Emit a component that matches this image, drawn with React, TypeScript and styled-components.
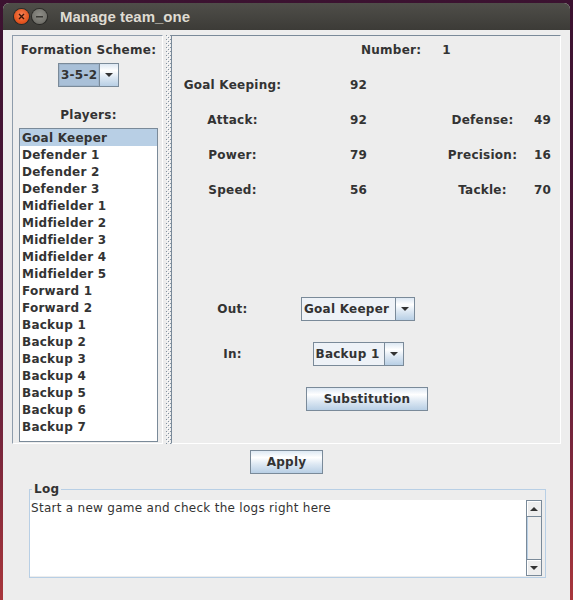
import React from "react";
import styled, { createGlobalStyle } from "styled-components";

const Global = createGlobalStyle`
  html, body { margin: 0; padding: 0; height: 100%; }
  body {
    background: linear-gradient(180deg, #3b1230 0%, #561a3b 55%, #a8363c 100%);
    overflow: hidden;
    font-family: "DejaVu Sans", "Liberation Sans", sans-serif;
  }
  * { box-sizing: border-box; }
`;

const Window = styled.div`
  margin: 3px 3px 0 3px;
  height: 597px;
  display: flex;
  flex-direction: column;
  border-radius: 6px 6px 0 0;
  overflow: hidden;
  background: #ededed;
`;

const TitleBar = styled.div`
  height: 27px;
  flex: none;
  display: flex;
  align-items: center;
  padding-left: 11px;
  background: linear-gradient(180deg, #4f4e49 0%, #3c3b37 100%);
`;

const WinButton = styled.div<{ $close?: boolean }>`
  width: 15px;
  height: 15px;
  border-radius: 50%;
  margin-right: 3px;
  display: flex;
  align-items: center;
  justify-content: center;
  box-shadow: 0 0 0 1px rgba(20, 20, 18, 0.55);
  background: ${(p) =>
    p.$close
      ? "radial-gradient(circle at 50% 40%, #f6855a 0%, #e6561f 60%, #c13d18 100%)"
      : "radial-gradient(circle at 50% 40%, #8f8e88 0%, #76756f 60%, #5f5e59 100%)"};
`;

const Title = styled.span`
  margin-left: 10px;
  font-family: "Liberation Sans", Arial, sans-serif;
  font-weight: bold;
  font-size: 15px;
  color: #dfdbd2;
`;

const Body = styled.div`
  flex: 1;
  display: flex;
  flex-direction: column;
  padding: 5px 9px 0 9px;
  color: #333333;
  font-size: 12px;
  font-weight: bold;
  letter-spacing: 0.25px;
`;

const Split = styled.div`
  display: flex;
  height: 409px;
  flex: none;
`;

const LeftPanel = styled.div`
  width: 151px;
  flex: none;
  display: flex;
  flex-direction: column;
  align-items: center;
  padding: 6px 4px 1px 6px;
  border: 1px solid;
  border-color: #8e9cab #ffffff #ffffff #8e9cab;
`;

const Label = styled.div`
  line-height: 17px;
  white-space: nowrap;
`;

const PlayersLabel = styled(Label)`
  margin-top: 20px;
`;

const Combo = styled.div<{ $w: number }>`
  width: ${(p) => p.$w}px;
  height: 24px;
  display: flex;
  border: 1px solid #7a8a99;
  flex: none;
  letter-spacing: 0.25px;
`;

const ComboValue = styled.div<{ $selected?: boolean }>`
  flex: 1;
  padding-left: 2px;
  display: flex;
  align-items: center;
  white-space: nowrap;
  background: ${(p) => (p.$selected ? "#a9c0d8" : "#eef2f7")};
  ${(p) => (p.$selected ? "box-shadow: inset 0 0 0 1px #9fb5cc;" : "")}
`;

const ComboArrow = styled.div`
  width: 19px;
  flex: none;
  border-left: 1px solid #7a8a99;
  display: flex;
  align-items: center;
  justify-content: center;
  background: linear-gradient(180deg, #dde8f3 0%, #ffffff 30%, #dde8f3 60%, #b8cfe5 100%);
`;

const FormationCombo = styled(Combo)`
  margin-top: 4px;
`;

const List = styled.div`
  align-self: stretch;
  flex: 1;
  margin-top: 4px;
  background: #ffffff;
  border: 1px solid #7a8a99;
`;

const ListItem = styled.div<{ $selected?: boolean }>`
  height: 17px;
  line-height: 17px;
  padding: 1px 0 0 2px;
  white-space: nowrap;
  background: ${(p) => (p.$selected ? "#b8cfe5" : "transparent")};
`;

const Divider = styled.div`
  width: 8px;
  flex: none;
  padding-left: 3px;
  display: flex;
`;

const RightPanel = styled.div`
  flex: 1;
  display: flex;
  flex-direction: column;
  padding-top: 6px;
  border: 1px solid;
  border-color: #7a8a99 #ffffff #ffffff #7a8a99;
`;

const NumberRow = styled.div`
  display: flex;
  gap: 21px;
  padding-left: 189px;
  line-height: 17px;
  margin-bottom: 18px;
`;

const StatsGrid = styled.div`
  display: grid;
  grid-template-columns: 121px 139px 101px auto;
  grid-auto-rows: 17px;
  row-gap: 18px;
  line-height: 17px;
`;

const StatLabel = styled.div`
  text-align: center;
  white-space: nowrap;
`;

const StatValue = styled.div<{ $pad: number }>`
  padding-left: ${(p) => p.$pad}px;
`;

const SubGrid = styled.div`
  margin-top: 98px;
  display: grid;
  grid-template-columns: 121px 130px;
  grid-auto-rows: 24px;
  row-gap: 21px;
  align-items: center;
`;

const SubLabel = styled.div`
  text-align: center;
`;

const ComboCell = styled.div`
  justify-self: center;
`;

const Button = styled.button<{ $w: number }>`
  width: ${(p) => p.$w}px;
  height: 24px;
  padding: 0;
  border: 1px solid #7a8a99;
  border-radius: 0;
  font-family: "DejaVu Sans", sans-serif;
  font-weight: bold;
  font-size: 12px;
  letter-spacing: 0.25px;
  color: #333333;
  background: linear-gradient(180deg, #dde8f3 0%, #ffffff 30%, #dde8f3 60%, #b8cfe5 100%);
`;

const SubButton = styled(Button)`
  grid-column: 2;
  justify-self: start;
  margin-left: 13px;
  margin-top: -1px;
`;

const ApplyButton = styled(Button)`
  align-self: center;
  margin-top: 6px;
  flex: none;
`;

const LogBox = styled.fieldset`
  margin: 8px 15px 0 17px;
  padding: 4px 3px 1px 0;
  border: 1px solid #b8cfe5;
  min-width: 0;
`;

const LogLegend = styled.legend`
  margin-left: 2px;
  padding: 0 2px;
  line-height: 14px;
  font-weight: bold;
  font-size: 12px;
`;

const LogInner = styled.div`
  display: flex;
  height: 76px;
`;

const LogText = styled.div`
  flex: 1;
  background: #ffffff;
  padding: 1px 1px 0 1px;
  font-weight: normal;
  line-height: 15px;
  letter-spacing: 0.28px;
  white-space: nowrap;
`;

const ScrollBar = styled.div`
  width: 16px;
  flex: none;
  display: flex;
  flex-direction: column;
  background: #eeeeee;
  border: 1px solid #7a8a99;
`;

const ScrollBtn = styled.div<{ $down?: boolean }>`
  height: 16px;
  flex: none;
  display: flex;
  align-items: center;
  justify-content: center;
  background: #eeeeee;
  box-shadow: inset 1px 1px 0 #ffffff;
  ${(p) => (p.$down ? "border-top: 1px solid #7a8a99;" : "border-bottom: 1px solid #7a8a99;")}
`;

const ScrollTrack = styled.div`
  flex: 1;
  box-shadow: inset 1px 0 0 #b8cfe5;
`;

const Tri = ({ up }: { up?: boolean }) => (
  <svg width="8" height="4" viewBox="0 0 8 4">
    <polygon points={up ? "0,4 8,4 4,0" : "0,0 8,0 4,4"} fill="#333333" />
  </svg>
);

const players = [
  "Goal Keeper",
  "Defender 1",
  "Defender 2",
  "Defender 3",
  "Midfielder 1",
  "Midfielder 2",
  "Midfielder 3",
  "Midfielder 4",
  "Midfielder 5",
  "Forward 1",
  "Forward 2",
  "Backup 1",
  "Backup 2",
  "Backup 3",
  "Backup 4",
  "Backup 5",
  "Backup 6",
  "Backup 7",
];

const stats: [string, string, string?, string?][] = [
  ["Goal Keeping:", "92"],
  ["Attack:", "92", "Defense:", "49"],
  ["Power:", "79", "Precision:", "16"],
  ["Speed:", "56", "Tackle:", "70"],
];

export default function App() {
  return (
    <>
      <Global />
      <Window>
        <TitleBar>
          <WinButton $close>
            <svg width="7" height="7" viewBox="0 0 7 7">
              <path d="M1 1L6 6M6 1L1 6" stroke="#3a1508" strokeWidth="1.4" />
            </svg>
          </WinButton>
          <WinButton>
            <svg width="7" height="2" viewBox="0 0 7 2">
              <rect x="0" y="0" width="7" height="1.5" fill="#3a3935" />
            </svg>
          </WinButton>
          <Title>Manage team_one</Title>
        </TitleBar>
        <Body>
          <Split>
            <LeftPanel>
              <Label>Formation Scheme:</Label>
              <FormationCombo $w={61}>
                <ComboValue $selected>3-5-2</ComboValue>
                <ComboArrow>
                  <Tri />
                </ComboArrow>
              </FormationCombo>
              <PlayersLabel>Players:</PlayersLabel>
              <List>
                {players.map((p, i) => (
                  <ListItem key={p} $selected={i === 0}>
                    {p}
                  </ListItem>
                ))}
              </List>
            </LeftPanel>
            <Divider>
              <svg width="5" height="100%">
                <defs>
                  <pattern id="bumps" width="4" height="4" patternUnits="userSpaceOnUse">
                    <rect x="0" y="0" width="1" height="1" fill="#8493a2" />
                    <rect x="2" y="2" width="1" height="1" fill="#8493a2" />
                    <rect x="1" y="1" width="1" height="1" fill="#ffffff" />
                    <rect x="3" y="3" width="1" height="1" fill="#ffffff" />
                  </pattern>
                </defs>
                <rect x="0" y="0" width="5" height="100%" fill="url(#bumps)" />
              </svg>
            </Divider>
            <RightPanel>
              <NumberRow>
                <span>Number:</span>
                <span>1</span>
              </NumberRow>
              <StatsGrid>
                {stats.map(([l, v, l2, v2]) => (
                  <React.Fragment key={l}>
                    <StatLabel>{l}</StatLabel>
                    <StatValue $pad={57}>{v}</StatValue>
                    {l2 ? <StatLabel>{l2}</StatLabel> : <div />}
                    {v2 ? <StatValue $pad={1}>{v2}</StatValue> : <div />}
                  </React.Fragment>
                ))}
              </StatsGrid>
              <SubGrid>
                <SubLabel>Out:</SubLabel>
                <ComboCell>
                  <Combo $w={114}>
                    <ComboValue>Goal Keeper</ComboValue>
                    <ComboArrow>
                      <Tri />
                    </ComboArrow>
                  </Combo>
                </ComboCell>
                <SubLabel>In:</SubLabel>
                <ComboCell>
                  <Combo $w={91}>
                    <ComboValue>Backup 1</ComboValue>
                    <ComboArrow>
                      <Tri />
                    </ComboArrow>
                  </Combo>
                </ComboCell>
                <SubButton $w={122}>Substitution</SubButton>
              </SubGrid>
            </RightPanel>
          </Split>
          <ApplyButton $w={73}>Apply</ApplyButton>
          <LogBox>
            <LogLegend>Log</LogLegend>
            <LogInner>
              <LogText>Start a new game and check the logs right here</LogText>
              <ScrollBar>
                <ScrollBtn>
                  <Tri up />
                </ScrollBtn>
                <ScrollTrack />
                <ScrollBtn $down>
                  <Tri />
                </ScrollBtn>
              </ScrollBar>
            </LogInner>
          </LogBox>
        </Body>
      </Window>
    </>
  );
}
